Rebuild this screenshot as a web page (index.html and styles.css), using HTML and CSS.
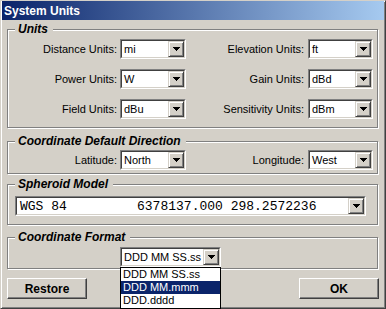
FILE: index.html
```html
<!DOCTYPE html>
<html>
<head>
<meta charset="utf-8">
<link rel="stylesheet" href="styles.css">
</head>
<body>
<div class="window">
  <div class="titlebar"><span class="title">System Units</span></div>

  <div class="group g-units">
    <span class="legend">Units</span>
    <div class="grid">
      <span class="lbl">Distance Units:</span>
      <div class="combo"><div class="combo-in"><span class="val">mi</span><span class="btn"><svg width="7" height="4" viewBox="0 0 7 4"><rect x="0" y="0" width="7" height="1"/><rect x="1" y="1" width="5" height="1"/><rect x="2" y="2" width="3" height="1"/><rect x="3" y="3" width="1" height="1"/></svg></span></div></div>
      <span class="lbl r">Elevation Units:</span>
      <div class="combo"><div class="combo-in"><span class="val">ft</span><span class="btn"><svg width="7" height="4" viewBox="0 0 7 4"><rect x="0" y="0" width="7" height="1"/><rect x="1" y="1" width="5" height="1"/><rect x="2" y="2" width="3" height="1"/><rect x="3" y="3" width="1" height="1"/></svg></span></div></div>

      <span class="lbl">Power Units:</span>
      <div class="combo"><div class="combo-in"><span class="val">W</span><span class="btn"><svg width="7" height="4" viewBox="0 0 7 4"><rect x="0" y="0" width="7" height="1"/><rect x="1" y="1" width="5" height="1"/><rect x="2" y="2" width="3" height="1"/><rect x="3" y="3" width="1" height="1"/></svg></span></div></div>
      <span class="lbl r">Gain Units:</span>
      <div class="combo"><div class="combo-in"><span class="val">dBd</span><span class="btn"><svg width="7" height="4" viewBox="0 0 7 4"><rect x="0" y="0" width="7" height="1"/><rect x="1" y="1" width="5" height="1"/><rect x="2" y="2" width="3" height="1"/><rect x="3" y="3" width="1" height="1"/></svg></span></div></div>

      <span class="lbl">Field Units:</span>
      <div class="combo"><div class="combo-in"><span class="val">dBu</span><span class="btn"><svg width="7" height="4" viewBox="0 0 7 4"><rect x="0" y="0" width="7" height="1"/><rect x="1" y="1" width="5" height="1"/><rect x="2" y="2" width="3" height="1"/><rect x="3" y="3" width="1" height="1"/></svg></span></div></div>
      <span class="lbl r">Sensitivity Units:</span>
      <div class="combo"><div class="combo-in"><span class="val">dBm</span><span class="btn"><svg width="7" height="4" viewBox="0 0 7 4"><rect x="0" y="0" width="7" height="1"/><rect x="1" y="1" width="5" height="1"/><rect x="2" y="2" width="3" height="1"/><rect x="3" y="3" width="1" height="1"/></svg></span></div></div>
    </div>
  </div>

  <div class="group g-cdd">
    <span class="legend">Coordinate Default Direction</span>
    <div class="grid">
      <span class="lbl">Latitude:</span>
      <div class="combo"><div class="combo-in"><span class="val">North</span><span class="btn"><svg width="7" height="4" viewBox="0 0 7 4"><rect x="0" y="0" width="7" height="1"/><rect x="1" y="1" width="5" height="1"/><rect x="2" y="2" width="3" height="1"/><rect x="3" y="3" width="1" height="1"/></svg></span></div></div>
      <span class="lbl r">Longitude:</span>
      <div class="combo"><div class="combo-in"><span class="val">West</span><span class="btn"><svg width="7" height="4" viewBox="0 0 7 4"><rect x="0" y="0" width="7" height="1"/><rect x="1" y="1" width="5" height="1"/><rect x="2" y="2" width="3" height="1"/><rect x="3" y="3" width="1" height="1"/></svg></span></div></div>
    </div>
  </div>

  <div class="group g-sph">
    <span class="legend">Spheroid Model</span>
    <div class="combo"><div class="combo-in"><span class="val mono">WGS 84         6378137.000 298.2572236</span><span class="btn"><svg width="7" height="4" viewBox="0 0 7 4"><rect x="0" y="0" width="7" height="1"/><rect x="1" y="1" width="5" height="1"/><rect x="2" y="2" width="3" height="1"/><rect x="3" y="3" width="1" height="1"/></svg></span></div></div>
  </div>

  <div class="group g-cf">
    <span class="legend">Coordinate Format</span>
    <div class="combo cf-combo">
      <div class="combo-in"><span class="val">DDD MM SS.ss</span><span class="btn"><svg width="7" height="4" viewBox="0 0 7 4"><rect x="0" y="0" width="7" height="1"/><rect x="1" y="1" width="5" height="1"/><rect x="2" y="2" width="3" height="1"/><rect x="3" y="3" width="1" height="1"/></svg></span></div>
      <div class="list">
        <div class="item">DDD MM SS.ss</div>
        <div class="item sel">DDD MM.mmm</div>
        <div class="item">DDD.dddd</div>
      </div>
    </div>
  </div>

  <div class="buttons">
    <div class="button">Restore</div>
    <div class="button">OK</div>
  </div>
</div>
</body>
</html>
```
FILE: styles.css
```css
* { box-sizing: border-box; }
html, body { margin: 0; padding: 0; }
body {
  width: 386px;
  height: 309px;
  overflow: hidden;
  background: #d4d0c8;
  font-family: "Liberation Sans", Arial, sans-serif;
  font-size: 11px;
  color: #000;
}
.window {
  width: 386px;
  height: 309px;
  background: #d4d0c8;
  border: 1px solid;
  border-color: #d4d0c8 #404040 #404040 #d4d0c8;
  box-shadow: inset 1px 1px #fff, inset -1px -1px #808080;
  padding: 0 6px;
}
.titlebar {
  margin: 0 -5px;
  height: 19px;
  background: linear-gradient(to right, #0a246a, #a6caf0);
  color: #fff;
  font-weight: bold;
  font-size: 12px;
  display: flex;
  align-items: center;
  padding-left: 2px;
}
.group {
  position: relative;
  width: 371px;
  border: 1px solid #808080;
  box-shadow: inset 1px 1px #fff, 1px 1px #fff;
}
.legend {
  position: absolute;
  top: -8px;
  left: 7px;
  padding: 0 5px 0 3px;
  line-height: 15px;
  background: #d4d0c8;
  font-weight: bold;
  font-style: italic;
  font-size: 12px;
}
.g-units { margin-top: 9px; height: 99px; padding: 9px 4px 0 0; }
.g-cdd { margin-top: 13px; height: 33px; padding: 8px 4px 0 0; }
.g-sph { margin-top: 10px; height: 41px; padding: 11px 11px 0 7px; }
.g-cf { margin-top: 12px; height: 32px; padding: 9px 0 0 112px; }

.grid {
  display: grid;
  grid-template-columns: 112px 66px 122px 65px;
  row-gap: 10px;
  align-items: center;
}
.lbl { text-align: right; padding-right: 3px; white-space: nowrap; }
.lbl.r { padding-right: 4px; }

.combo {
  height: 20px;
  background: #fff;
  border: 1px solid;
  border-color: #808080 #fff #fff #808080;
}
.combo-in {
  height: 100%;
  border: 1px solid;
  border-color: #404040 #d4d0c8 #d4d0c8 #404040;
  display: flex;
  align-items: center;
}
.val {
  flex: 1;
  padding-left: 2px;
  white-space: pre;
  overflow: hidden;
}
.val.mono {
  font-family: "Liberation Mono", "Courier New", monospace;
  font-size: 13px;
  padding-left: 3px;
}
.btn {
  width: 16px;
  height: 16px;
  flex: none;
  background: #d4d0c8;
  border: 1px solid;
  border-color: #d4d0c8 #404040 #404040 #d4d0c8;
  box-shadow: inset 1px 1px #fff, inset -1px -1px #808080;
  display: flex;
  align-items: center;
  justify-content: center;
}
.btn svg { display: block; fill: #000; }

.cf-combo { width: 101px; position: relative; }
.list {
  position: absolute;
  left: -1px;
  top: 19px;
  width: 101px;
  border: 1px solid #000;
  background: #fff;
  z-index: 5;
  padding-bottom: 1px;
}
.item {
  height: 13px;
  line-height: 13px;
  padding-left: 2px;
  white-space: nowrap;
}
.item.sel { background: #0a246a; color: #fff; }

.buttons {
  margin-top: 9px;
  display: flex;
  justify-content: space-between;
}
.button {
  width: 80px;
  height: 21px;
  background: #d4d0c8;
  border: 1px solid;
  border-color: #fff #404040 #404040 #fff;
  box-shadow: inset -1px -1px #808080;
  display: flex;
  align-items: center;
  justify-content: center;
  font-weight: bold;
  font-size: 12px;
}
```
